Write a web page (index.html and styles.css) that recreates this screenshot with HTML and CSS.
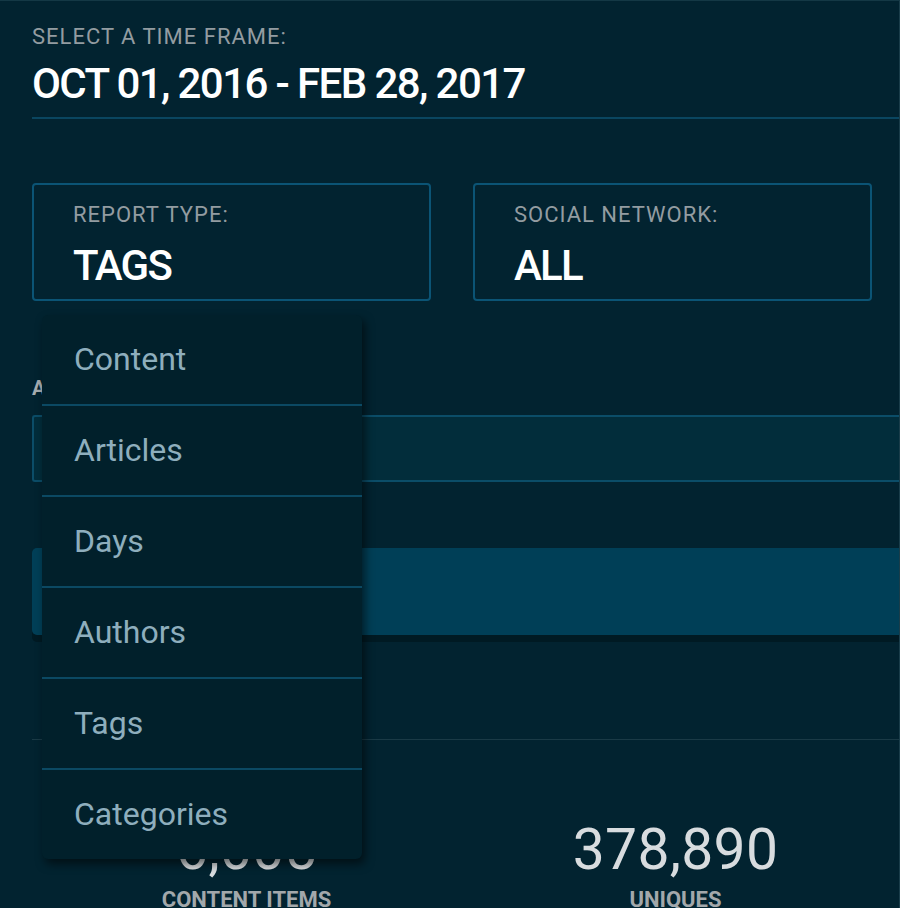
FILE: index.html
```html
<!DOCTYPE html>
<html lang="en">
<head>
<meta charset="utf-8">
<title>Report filters</title>
<link rel="stylesheet" href="styles.css">
</head>
<body>
<div class="page">
  <section class="timeframe">
    <div class="eyebrow">SELECT A TIME FRAME:</div>
    <div class="date">OCT 01, 2016 - FEB 28, 2017</div>
  </section>

  <div class="filters">
    <div class="filter">
      <div class="eyebrow">REPORT TYPE:</div>
      <div class="value">TAGS</div>
    </div>
    <div class="filter">
      <div class="eyebrow">SOCIAL NETWORK:</div>
      <div class="value">ALL</div>
    </div>
  </div>

  <div class="section-label">ARTICLES:</div>
  <div class="search-row"></div>
  <div class="bar"></div>
  <div class="rule"></div>

  <div class="stats">
    <div class="stat">
      <div class="stat-num">6,005</div>
      <div class="stat-label">CONTENT ITEMS</div>
    </div>
    <div class="stat">
      <div class="stat-num">378,890</div>
      <div class="stat-label">UNIQUES</div>
    </div>
  </div>

  <ul class="menu">
    <li class="menu-item">Content</li>
    <li class="menu-item">Articles</li>
    <li class="menu-item">Days</li>
    <li class="menu-item">Authors</li>
    <li class="menu-item">Tags</li>
    <li class="menu-item">Categories</li>
  </ul>
</div>
</body>
</html>
```

FILE: styles.css
```css
html, body {
  margin: 0;
  padding: 0;
  background: #022330;
}

body {
  font-family: Roboto, "Noto Sans", sans-serif;
  width: 900px;
  height: 908px;
  overflow: hidden;
}

.page {
  position: relative;
  box-sizing: border-box;
  width: 900px;
  height: 908px;
  padding-left: 32px;
  border-top: 1px solid #143845;
  border-right: 1px solid #1a3d4a;
  overflow: hidden;
}

.timeframe {
  padding-top: 25px;
  padding-bottom: 12px;
  border-bottom: 2px solid #0a4660;
}

.eyebrow {
  font-size: 22px;
  line-height: 22px;
  color: #939ca1;
  letter-spacing: 1px;
}

.date {
  margin-top: 15px;
  font-size: 42px;
  line-height: 42px;
  font-weight: 500;
  color: #ffffff;
  letter-spacing: -1.6px;
}

.filters {
  margin-top: 64px;
  width: 840px;
  display: grid;
  grid-template-columns: 399px 399px;
  column-gap: 42px;
}

.filter {
  border: 2px solid #0b5475;
  border-radius: 4px;
  padding: 19px 20px 12px 39px;
}

.value {
  margin-top: 19px;
  font-size: 42px;
  line-height: 42px;
  font-weight: 500;
  color: #ffffff;
  letter-spacing: -1.8px;
}

.section-label {
  margin-top: 77px;
  font-size: 20px;
  line-height: 20px;
  font-weight: 700;
  color: #a7adb0;
}

.search-row {
  margin-top: 17px;
  height: 63px;
  background: #022d3b;
  border: 2px solid #0b4d68;
  border-right: none;
  border-radius: 3px 0 0 3px;
}

.bar {
  margin-top: 66px;
  height: 87px;
  background: #003f57;
  border-radius: 5px 0 0 5px;
  box-shadow: 0 7px 0 #001a23;
}

.rule {
  margin-top: 104px;
  height: 1px;
  background: #1a3a46;
}

.stats {
  margin-top: 81px;
  display: grid;
  grid-template-columns: 429px 429px;
}

.stat {
  text-align: center;
}

.stat-num {
  font-size: 57px;
  line-height: 57px;
  font-weight: 400;
  color: #d8dcdf;
  letter-spacing: 0.3px;
}

.stat-label {
  margin-top: 11px;
  font-size: 22px;
  line-height: 22px;
  font-weight: 700;
  color: #a2a8ab;
}

.menu {
  position: absolute;
  left: 42px;
  top: 314px;
  width: 320px;
  margin: 0;
  padding: 0;
  list-style: none;
  background: #01202b;
  border-radius: 6px;
  box-shadow: 3px 5px 10px rgba(0, 0, 0, 0.55);
}

.menu-item {
  height: 89px;
  line-height: 89px;
  padding-left: 32px;
  font-size: 32px;
  color: #8eaebd;
}

.menu-item + .menu-item {
  border-top: 2px solid #0b4963;
}
```
